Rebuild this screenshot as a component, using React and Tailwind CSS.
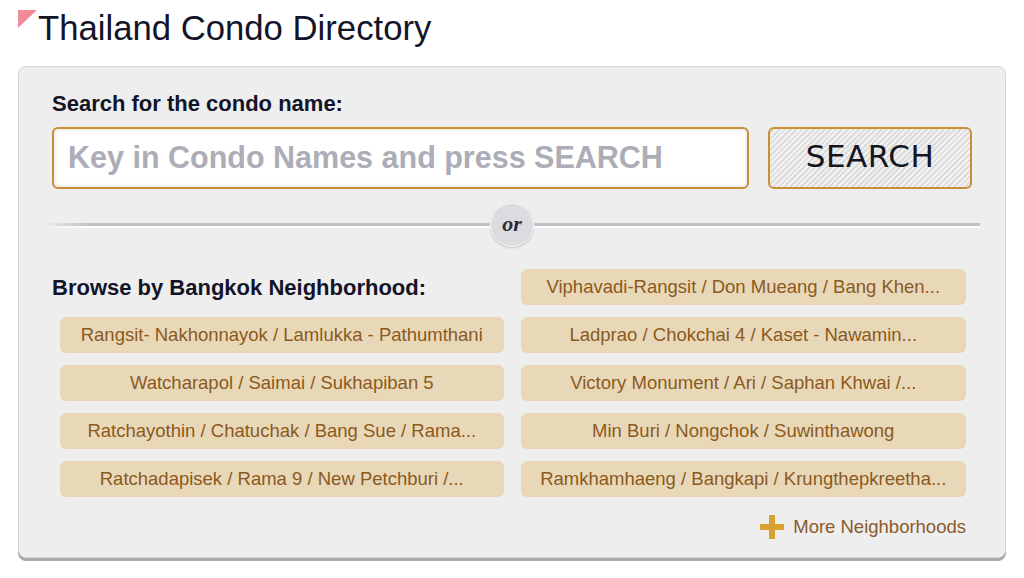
import React from 'react';

const leftAreas = [
  'Rangsit- Nakhonnayok / Lamlukka - Pathumthani',
  'Watcharapol / Saimai / Sukhapiban 5',
  'Ratchayothin / Chatuchak / Bang Sue / Rama...',
  'Ratchadapisek / Rama 9 / New Petchburi /...',
];

const rightAreas = [
  'Viphavadi-Rangsit / Don Mueang / Bang Khen...',
  'Ladprao / Chokchai 4 / Kaset - Nawamin...',
  'Victory Monument / Ari / Saphan Khwai /...',
  'Min Buri / Nongchok / Suwinthawong',
  'Ramkhamhaeng / Bangkapi / Krungthepkreetha...',
];

const AreaButton = ({ label }) => (
  <button className="h-9 w-full rounded-md bg-[#e9d8b8] text-[18.5px] text-[#8a5a1e] flex items-center justify-center whitespace-nowrap">
    {label}
  </button>
);

const App = () => {
  return (
    <div className="w-[1024px] h-[578px] bg-white overflow-hidden font-['Liberation_Sans',Arial,sans-serif]">
      {/* Title */}
      <div className="flex items-start pl-[18px] pt-[10px] h-[66px]">
        <div className="w-[19px] h-[18px] bg-[#f28b97] [clip-path:polygon(0_0,100%_0,0_100%)]" />
        <h1 className="ml-px text-[34.7px] leading-[36px] text-[#141428]">Thailand Condo Directory</h1>
      </div>

      {/* Panel */}
      <div className="ml-[18px] w-[988px] h-[492px] rounded-lg border border-[#d6d6d6] bg-[#eeeeef] shadow-[0_3px_0_#a9a9ae] px-[33px] pt-[25px]">
        <p className="text-[22px] leading-6 font-bold text-[#141428]">Search for the condo name:</p>

        <div className="mt-[11px] flex gap-[19px]">
          <div className="w-[697px] h-[62px] rounded-md border-2 border-[#c98f36] bg-white shadow-[inset_0_0_4px_rgba(0,0,0,0.15)] flex items-center pl-[14px]">
            <span className="text-[30.5px] font-bold text-[#acadb6]">Key in Condo Names and press SEARCH</span>
          </div>
          <button className="w-[204px] h-[62px] rounded-md border-2 border-[#c98f36] bg-[repeating-linear-gradient(135deg,#f2f2f2_0px,#f2f2f2_2px,#dcdcdc_2px,#dcdcdc_4px)] flex items-center justify-center">
            <span className="text-[31px] text-[#15151f] font-['DejaVu_Sans',sans-serif] tracking-[0.5px] -mt-1">SEARCH</span>
          </button>
        </div>

        {/* Divider */}
        <div className="mt-[13px] -mx-[8px] h-[46px] flex items-center">
          <div className="flex-1 h-[5px] border-t-[3px] border-[#c0c0c8] border-b-2 border-b-white [mask-image:linear-gradient(90deg,transparent_0%,black_10%)]" />
          <div className="w-[44px] h-[44px] rounded-full bg-[#dcdce0] border border-[#f8f8f8] shadow-[0_1px_2px_rgba(0,0,0,0.2)] flex items-center justify-center">
            <span className="font-['Liberation_Serif',serif] italic font-bold text-[22px] text-[#2a2a3a] -mt-1">or</span>
          </div>
          <div className="flex-1 h-[5px] border-t-[3px] border-[#c0c0c8] border-b-2 border-b-white" />
        </div>

        {/* Neighborhoods */}
        <div className="mt-[21px] grid grid-cols-2 gap-x-[17px]">
          <div className="flex flex-col gap-[12px] pl-[8px]">
            <p className="h-9 -ml-[8px] flex items-center text-[22px] font-bold text-[#141428]">Browse by Bangkok Neighborhood:</p>
            {leftAreas.map((a) => (
              <AreaButton key={a} label={a} />
            ))}
          </div>
          <div className="flex flex-col gap-[12px] pr-[6px]">
            {rightAreas.map((a) => (
              <AreaButton key={a} label={a} />
            ))}
          </div>
        </div>

        <div className="mt-[16px] flex justify-end items-center pr-[6px] gap-[9px]">
          <svg width="24" height="24" viewBox="0 0 24 24">
            <path d="M9 0h6v9h9v6h-9v9H9v-9H0V9h9z" fill="#d9a032" />
          </svg>
          <span className="text-[18.5px] text-[#8a5a2a]">More Neighborhoods</span>
        </div>
      </div>
    </div>
  );
};

export default App;
